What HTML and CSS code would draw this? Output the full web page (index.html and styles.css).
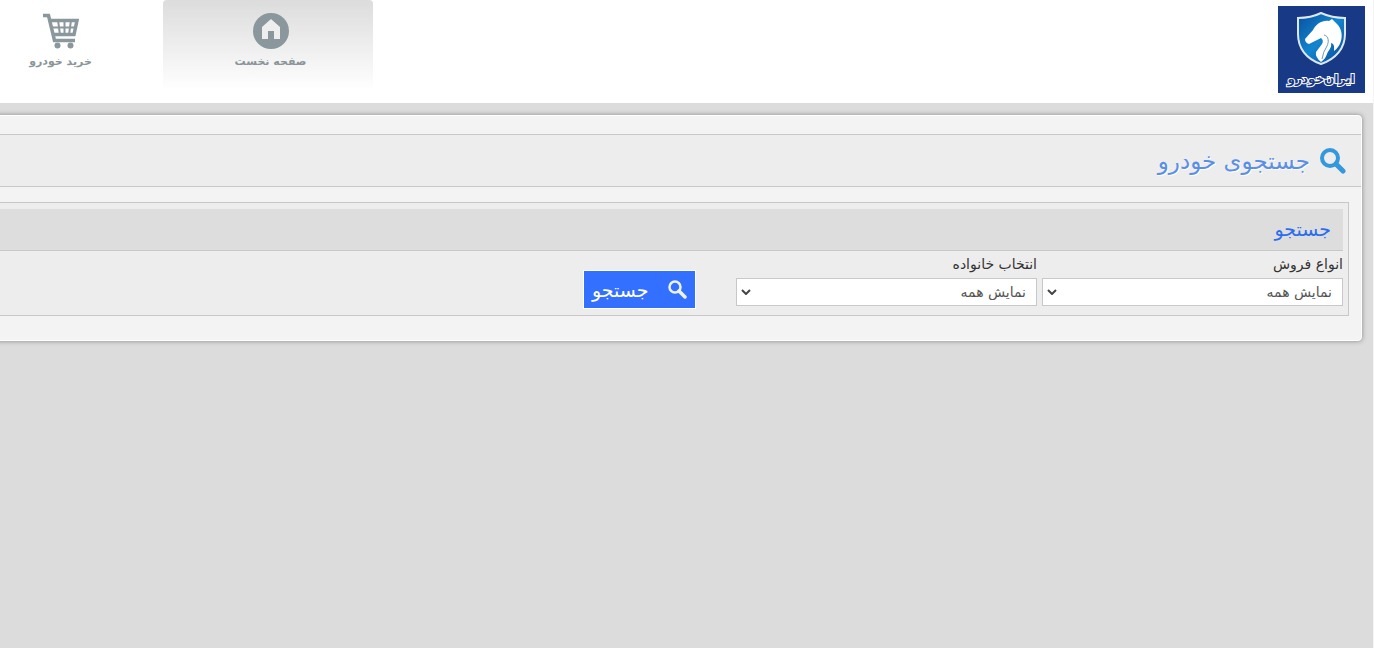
FILE: index.html
```html
<!DOCTYPE html>
<html lang="fa" dir="rtl">
  <head>
    <meta charset="UTF-8" />
    <title>جستجوی خودرو</title>
    <link rel="stylesheet" href="styles.css">
  </head>
  <body>
    <header class="header">
      <a class="logo" href="#">
        <svg width="87" height="87" viewBox="0 0 87 87">
          <defs>
            <linearGradient id="shield" x1="0" y1="0" x2="1" y2="1">
              <stop offset="0" stop-color="#0a4f9e" />
              <stop offset="0.5" stop-color="#1186cf" />
              <stop offset="1" stop-color="#0c4594" />
            </linearGradient>
          </defs>
          <rect width="87" height="87" fill="#183986" />
          <path d="M20 12Q33 12 43 7Q54 12 67 12V28C67 42 58 53 43 58C28 53 20 42 20 28Z" fill="url(#shield)" stroke="#dce8f4" stroke-width="2" />
          <path d="M54 13L51 15C44 14 38 18 35 24L27 33Q27 37 31 38L37 35L43 32Q46 34 44 38Q41 42 38 46Q37 51 43 56C46 54 48 51 49 48C51 43 54 42 53 37C57 38 56 42 56 45C64 40 67 26 59 18Q56 15 54 13Z" fill="#fff" />
          <path d="M46 29C51 30 51 36 49 40Q45 46 44 53" fill="none" stroke="#6d97bd" stroke-width="1" />
        </svg>
        <svg class="wordmark" width="87" height="24" viewBox="0 0 87 24">
          <text x="43" y="14" text-anchor="middle">ایران‌خودرو</text>
        </svg>
      </a>
      <nav class="nav">
        <a class="nav-item active" href="#">
          <svg width="36" height="36" viewBox="0 0 36 36">
            <circle cx="18" cy="18" r="18" fill="#8a979c" />
            <path d="M18 6L27 14V26H21V18H15V26H9V14Z" fill="#eee" />
          </svg>
          <span>صفحه نخست</span>
        </a>
        <a class="nav-item" href="#">
          <svg width="36" height="36" viewBox="0 0 36 36" fill="none" stroke="#8a979c">
            <path d="M0 2.500H5.500L11.500 27.500H32" stroke-width="3.500" />
            <path d="M8 7.500H34L31 21.500H11" stroke-width="3.500" />
            <path d="M8 14.500H33M15 7L17 22M21.500 7V22M28 7L26 22" stroke-width="2" />
            <circle cx="14.500" cy="32.500" r="3" fill="#8a979c" stroke="none" />
            <circle cx="27.500" cy="32.500" r="3" fill="#8a979c" stroke="none" />
          </svg>
          <span>خرید خودرو</span>
        </a>
      </nav>
    </header>

    <main class="content">
      <section class="panel">
        <div class="page-title">
          <svg width="26" height="26" viewBox="0 0 26 26" fill="none" stroke="#3498db">
            <circle cx="10" cy="10" r="8" stroke-width="4" />
            <path d="M16 16L23 23" stroke-width="5" stroke-linecap="round" />
          </svg>
          <h1>جستجوی خودرو</h1>
        </div>

        <form class="search-box">
          <h2>جستجو</h2>
          <div class="fields">
            <div class="field">
              <label for="sale-type">انواع فروش</label>
              <div class="select">
                <select id="sale-type">
                  <option>نمایش همه</option>
                </select>
                <svg class="arrow" width="10" height="6" viewBox="0 0 10 6"><path d="M1 1L5 5L9 1" /></svg>
              </div>
            </div>
            <div class="field">
              <label for="family">انتخاب خانواده</label>
              <div class="select">
                <select id="family">
                  <option>نمایش همه</option>
                </select>
                <svg class="arrow" width="10" height="6" viewBox="0 0 10 6"><path d="M1 1L5 5L9 1" /></svg>
              </div>
            </div>
            <button class="search-button" type="button">
              <svg width="19" height="19" viewBox="0 0 19 19" fill="none" stroke="#edf3ff">
                <circle cx="7" cy="7" r="5.500" stroke-width="2.500" />
                <path d="M11 11L17 17" stroke-width="3.500" stroke-linecap="round" />
              </svg>
              <span>جستجو</span>
            </button>
          </div>
        </form>
      </section>
    </main>
  </body>
</html>
```
FILE: styles.css
```css
* {
  box-sizing: border-box;
}

body {
  margin: 0;
  min-height: 100vh;
  border-right: 1px solid #f4f4f4;
  background-color: #dcdcdc;
  font-family: "DejaVu Sans", sans-serif;
  font-size: 14px;
  color: #333;
  overflow-x: hidden;
}

/* header */
.header {
  display: flex;
  justify-content: space-between;
  align-items: flex-start;
  height: 103px;
  background-color: #fff;
}

.logo {
  position: relative;
  margin: 6px 8px 0 0;
}

.logo svg {
  display: block;
}

.wordmark {
  position: absolute;
  right: 0;
  bottom: 0;
  font-size: 12px;
  font-weight: bold;
  fill: #183986;
  stroke: #fff;
  stroke-width: 2px;
  paint-order: stroke;
}

.nav {
  display: flex;
  width: 373px;
  overflow: hidden;
}

.nav-item {
  display: flex;
  flex: 0 0 210px;
  flex-direction: column;
  align-items: center;
  gap: 3px;
  height: 90px;
  padding: 13px 0 0 5px;
  border-radius: 4px;
  font-size: 11px;
  font-weight: bold;
  line-height: 20px;
  color: #8a9599;
  text-decoration: none;
}

.nav-item.active {
  background: linear-gradient(#dcdcdc, #fff);
}

/* main panel */
.content {
  padding: 12px 11px 12px 0;
}

.panel {
  margin-left: -10px;
  padding: 18px 0 24px;
  border: 1px solid #fff;
  border-radius: 4px;
  background-color: #f3f3f3;
  box-shadow: 0 0 5px #888;
}

.page-title {
  display: flex;
  align-items: center;
  gap: 10px;
  height: 53px;
  padding-right: 15px;
  border-top: 1px solid #c8c8c8;
  border-bottom: 1px solid #c8c8c8;
  background-color: #ededed;
}

h1 {
  margin: 0;
  font-size: 23px;
  font-weight: normal;
  line-height: 28px;
  color: #5b8fe6;
  text-shadow: 1px 1px 0 #fff;
}

.search-box {
  margin: 15px 12px 0 0;
  padding: 6px 5px 9px 0;
  border: 1px solid #c8c8c8;
  border-left: none;
  background-color: #ededed;
}

h2 {
  margin: 0;
  padding-right: 12px;
  border-bottom: 1px solid #c8c8c8;
  background-color: #ddd;
  font-size: 19px;
  font-weight: normal;
  line-height: 41px;
  color: #2a6cf0;
}

.fields {
  display: flex;
  align-items: flex-end;
  gap: 5px;
}

.field {
  flex: 0 1 301px;
}

.field label {
  display: block;
  line-height: 27px;
}

.select {
  position: relative;
}

select {
  display: block;
  width: 100%;
  height: 28px;
  padding: 0 10px;
  border: 1px solid #c8c8c8;
  border-radius: 0;
  background-color: #fff;
  font-family: inherit;
  font-size: 14px;
  color: #555;
  appearance: none;
}

.arrow {
  position: absolute;
  left: 5px;
  top: 11px;
  fill: none;
  stroke: #444;
  stroke-width: 2;
  pointer-events: none;
}

.search-button {
  display: flex;
  align-items: center;
  justify-content: space-between;
  width: 113px;
  height: 39px;
  margin: 0 35px -3px 0;
  padding: 0 8px;
  border: 1px solid #fff;
  background-color: #3370ff;
  font-family: inherit;
  font-size: 19px;
  color: #fff;
  cursor: pointer;
}
```
